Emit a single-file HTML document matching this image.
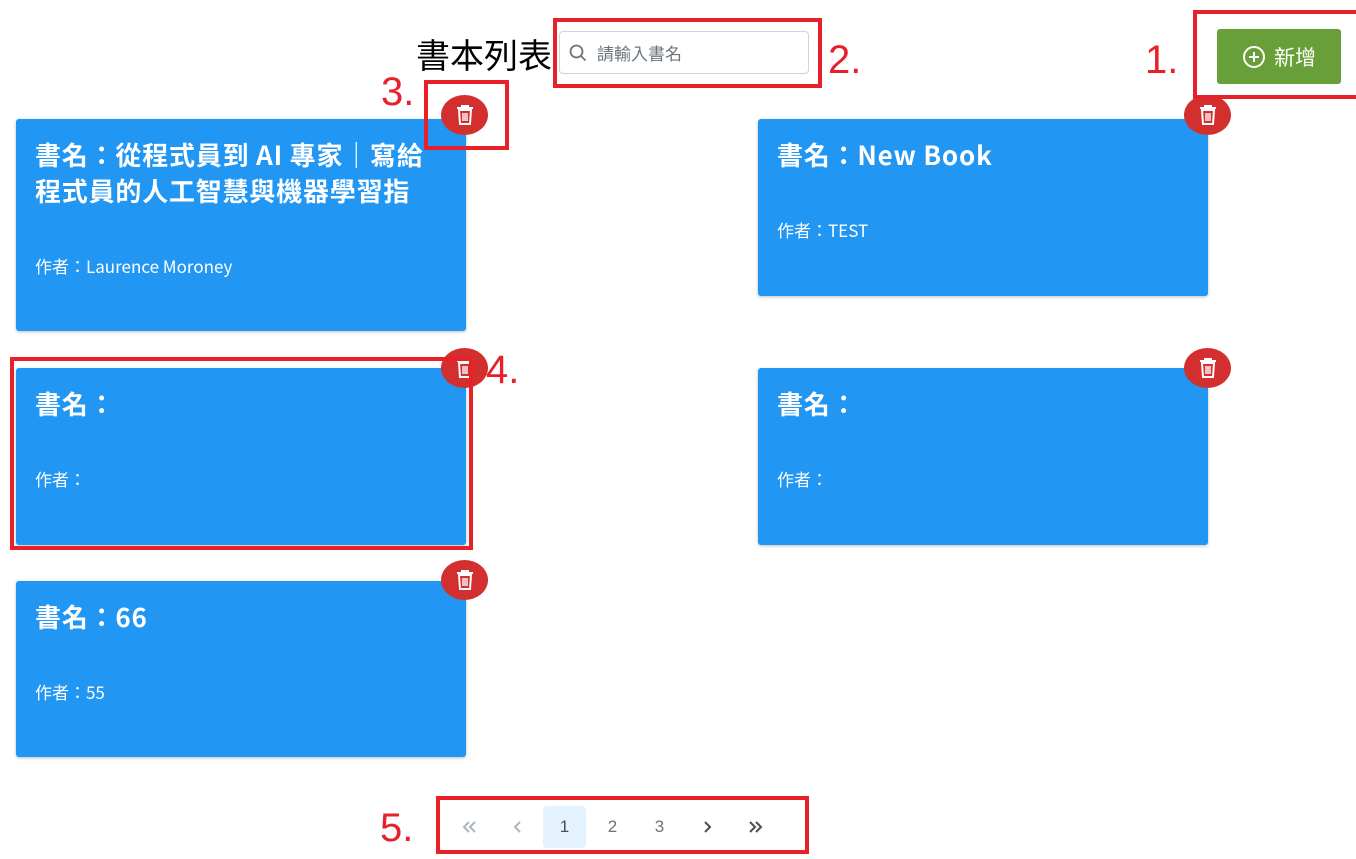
<!DOCTYPE html>
<html><head><meta charset="utf-8"><style>
body{margin:0;width:1356px;height:859px;background:#fff;position:relative;overflow:hidden;font-family:"Noto Sans CJK TC","Liberation Sans",sans-serif}
.a{position:absolute}
.card{position:absolute;background:#2196F3;border-radius:3px;box-shadow:0 1px 3px rgba(0,0,0,.25);color:#fff;box-sizing:border-box;padding:18px 19px}
.card h2{margin:0;font-size:26px;letter-spacing:0.8px;line-height:36px;font-weight:bold;white-space:nowrap}
.card p{margin:0;position:absolute;left:19px;font-size:17px;line-height:20px}
.del{position:absolute;width:47px;height:40px;border-radius:50%;background:#D32F2F;display:flex;align-items:center;justify-content:center}
.rb{position:absolute;border:4px solid #E8202A;box-sizing:border-box}
.lb{position:absolute;color:#E8202A;font-size:40px;line-height:40px;font-family:"Liberation Sans",sans-serif}
.pg{position:absolute;top:806px;width:43px;height:42px;display:flex;align-items:center;justify-content:center;color:#6c757d;font-size:17px;font-family:"Liberation Sans",sans-serif}
</style></head><body>
<div class="a" style="left:416px;top:30px;font-size:34px;line-height:48px">書本列表</div>
<div class="a" style="left:559px;top:31px;width:250px;height:43px;border:1px solid #ced4da;border-radius:4px;box-sizing:border-box;background:#fff">
<svg class="a" style="left:9px;top:12px" width="18" height="18" viewBox="0 0 18 18"><circle cx="7.5" cy="7.5" r="6" fill="none" stroke="#6c757d" stroke-width="1.8"/><path d="M12 12l4.5 4.5" stroke="#6c757d" stroke-width="1.8"/></svg>
<span class="a" style="left:37px;top:9px;color:#6c757d;font-size:17px;line-height:24px">請輸入書名</span></div>
<div class="a" style="left:1217px;top:29px;width:124px;height:55px;background:#689F38;border-radius:3px;color:#fff;display:flex;align-items:center;justify-content:center;font-size:21px">
<svg width="24" height="24" viewBox="0 0 24 24" style="margin-right:8px"><circle cx="12" cy="12" r="10" fill="none" stroke="#fff" stroke-width="2"/><path d="M12 7v10M7 12h10" stroke="#fff" stroke-width="2"/></svg>新增</div>

<div class="card" style="left:16px;top:119px;width:450px;height:212px"><h2>書名：從程式員到 AI 專家｜寫給<br>程式員的人工智慧與機器學習指</h2><p style="top:137px">作者：Laurence Moroney</p></div>
<div class="card" style="left:758px;top:119px;width:450px;height:177px"><h2>書名：New Book</h2><p style="top:101px">作者：TEST</p></div>
<div class="card" style="left:16px;top:368px;width:450px;height:177px"><h2>書名：</h2><p style="top:101px">作者：</p></div>
<div class="card" style="left:758px;top:368px;width:450px;height:177px"><h2>書名：</h2><p style="top:101px">作者：</p></div>
<div class="card" style="left:16px;top:581px;width:450px;height:176px"><h2>書名：66</h2><p style="top:101px">作者：55</p></div>

<div class="del" style="left:441px;top:95px"><svg width="18" height="22" viewBox="0 0 18 22"><path d="M1 4h16M6 4V2h6v2M3 6h12l-1 14H4z" fill="none" stroke="#fff" stroke-width="2"/><path d="M7 9v8M9 9v8M11 9v8" stroke="#fff" stroke-width="1.4"/></svg></div>
<div class="del" style="left:1184px;top:95px"><svg width="18" height="22" viewBox="0 0 18 22"><path d="M1 4h16M6 4V2h6v2M3 6h12l-1 14H4z" fill="none" stroke="#fff" stroke-width="2"/><path d="M7 9v8M9 9v8M11 9v8" stroke="#fff" stroke-width="1.4"/></svg></div>
<div class="del" style="left:441px;top:348px"><svg width="18" height="22" viewBox="0 0 18 22"><path d="M1 4h16M6 4V2h6v2M3 6h12l-1 14H4z" fill="none" stroke="#fff" stroke-width="2"/><path d="M7 9v8M9 9v8M11 9v8" stroke="#fff" stroke-width="1.4"/></svg></div>
<div class="del" style="left:1184px;top:348px"><svg width="18" height="22" viewBox="0 0 18 22"><path d="M1 4h16M6 4V2h6v2M3 6h12l-1 14H4z" fill="none" stroke="#fff" stroke-width="2"/><path d="M7 9v8M9 9v8M11 9v8" stroke="#fff" stroke-width="1.4"/></svg></div>
<div class="del" style="left:441px;top:560px"><svg width="18" height="22" viewBox="0 0 18 22"><path d="M1 4h16M6 4V2h6v2M3 6h12l-1 14H4z" fill="none" stroke="#fff" stroke-width="2"/><path d="M7 9v8M9 9v8M11 9v8" stroke="#fff" stroke-width="1.4"/></svg></div>

<div class="pg" style="left:448px"><svg width="16" height="14" viewBox="0 0 16 14"><path d="M7 2L2 7l5 5M13 2L8 7l5 5" fill="none" stroke="#adb5bd" stroke-width="2"/></svg></div>
<div class="pg" style="left:496px"><svg width="10" height="14" viewBox="0 0 10 14"><path d="M7 2L2 7l5 5" fill="none" stroke="#adb5bd" stroke-width="2"/></svg></div>
<div class="pg" style="left:543px;background:#E3F2FD;border-radius:4px;color:#495057">1</div>
<div class="pg" style="left:591px">2</div>
<div class="pg" style="left:638px">3</div>
<div class="pg" style="left:685px"><svg width="10" height="14" viewBox="0 0 10 14"><path d="M3 2l5 5-5 5" fill="none" stroke="#495057" stroke-width="2"/></svg></div>
<div class="pg" style="left:733px"><svg width="16" height="14" viewBox="0 0 16 14"><path d="M3 2l5 5-5 5M9 2l5 5-5 5" fill="none" stroke="#495057" stroke-width="2"/></svg></div>

<div class="rb" style="left:1193px;top:10px;width:170px;height:89px"></div>
<div class="rb" style="left:553px;top:18px;width:269px;height:70px"></div>
<div class="rb" style="left:424px;top:80px;width:85px;height:70px"></div>
<div class="rb" style="left:10px;top:357px;width:463px;height:193px"></div>
<div class="rb" style="left:436px;top:796px;width:373px;height:58px"></div>
<div class="lb" style="left:1145px;top:40px">1.</div>
<div class="lb" style="left:828px;top:40px">2.</div>
<div class="lb" style="left:381px;top:72px">3.</div>
<div class="lb" style="left:486px;top:350px">4.</div>
<div class="lb" style="left:380px;top:808px">5.</div>
</body></html>
